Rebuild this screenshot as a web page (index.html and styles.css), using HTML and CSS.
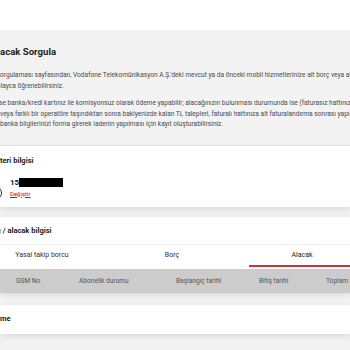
FILE: index.html
```html
<!DOCTYPE html>
<html lang="tr">
<head>
<meta charset="utf-8">
<link rel="stylesheet" href="styles.css">
</head>
<body>
<div class="page">
  <div class="topbar"></div>
  <section class="intro">
    <h1 class="intro-title">acak Sorgula</h1>
    <p class="intro-text">
      <span class="line">orgulaması sayfasından, Vodafone Telekomünikasyon A.Ş.'deki mevcut ya da önceki mobil hizmetlerinize ait borç veya alacak</span>
      <span class="line line-cut">ılayca öğrenebilirsiniz.</span>
    </p>
    <p class="intro-text">
      <span class="line line-cut">se banka/kredi kartınız ile komisyonsuz olarak ödeme yapabilir; alacağınızın bulunması durumunda ise (faturasız hattınız</span>
      <span class="line">veya farklı bir operatöre taşındıktan sonra bakiyenizde kalan TL talepleri, faturalı hattınıza ait faturalandırma sonrası yapılan</span>
      <span class="line">banka bilgilerinizi forma girerek iadenin yapılması için kayıt oluşturabilirsiniz.</span>
    </p>
  </section>

  <section class="card card-customer">
    <h2 class="card-title">teri bilgisi</h2>
    <div class="customer-row">
      <svg class="avatar" width="16" height="16" viewBox="0 0 16 16"><circle cx="8" cy="8" r="6.5" fill="none" stroke="#333" stroke-width="1"/><path d="M3.5 13 Q8 8 12.5 13" fill="none" stroke="#333" stroke-width="1"/></svg>
      <div class="customer-info">
        <div class="msisdn">15<span class="redact"></span></div>
        <a class="change-link" href="#">Değiştir</a>
      </div>
    </div>
  </section>

  <section class="card card-debt">
    <h2 class="card-title card-title-cut">ç / alacak bilgisi</h2>
    <div class="tabs">
      <div class="tab">Yasal takip borcu</div>
      <div class="tab">Borç</div>
      <div class="tab tab-active">Alacak</div>
    </div>
    <div class="table-head">
      <div class="th">GSM No</div>
      <div class="th">Abonelik durumu</div>
      <div class="th">Başlangıç tarihi</div>
      <div class="th">Bitiş tarihi</div>
      <div class="th">Toplam iade tutarı</div>
    </div>
  </section>

  <section class="card card-pay">
    <h2 class="card-title">me</h2>
  </section>
</div>
</body>
</html>
```

FILE: styles.css
```css
html, body {
  margin: 0;
  padding: 0;
}
body {
  width: 350px;
  height: 350px;
  overflow: hidden;
  background: #f2f2f2;
  font-family: Roboto, "Liberation Sans", sans-serif;
  color: #333;
}
.page {
  display: flex;
  flex-direction: column;
}
.topbar {
  height: 30px;
  background: #ffffff;
}
.intro {
  background: #f3f3f3;
  padding: 15px 0 15px 0;
  border-bottom: 1px solid #e6e6e6;
}
.intro-title {
  margin: 0;
  font-size: 9.6px;
  line-height: 13px;
  font-weight: 700;
  color: #222;
  white-space: nowrap;
}
.intro-text {
  margin: 12px 0 0 0;
  font-size: 6.6px;
  line-height: 10.5px;
  color: #4a4a4a;
}
.intro-text + .intro-text {
  margin-top: 7px;
}
.line {
  display: block;
  white-space: nowrap;
}
.line-cut {
  margin-left: -1px;
}
.card {
  background: #ffffff;
  box-shadow: 0 2px 6px rgba(0, 0, 0, 0.10);
}
.card-title {
  margin: 0;
  font-size: 7.5px;
  line-height: 10px;
  font-weight: 700;
  color: #222;
  white-space: nowrap;
}
.card-customer {
  padding: 10px 0 9px 0;
  height: 42px;
}
.customer-row {
  display: flex;
  align-items: flex-start;
  margin-top: 12px;
}
.avatar {
  margin-left: -13px;
  margin-top: 7px;
  flex: none;
}
.customer-info {
  margin-left: 7px;
  display: flex;
  flex-direction: column;
}
.msisdn {
  position: relative;
  font-size: 8px;
  line-height: 10px;
  font-weight: 700;
  color: #222;
}
.redact {
  position: absolute;
  left: 9px;
  top: 0;
  width: 44px;
  height: 9px;
  background: #000;
}
.change-link {
  margin-top: 1px;
  font-size: 6px;
  line-height: 9px;
  color: #e60000;
  text-decoration: underline;
}
.card-debt {
  margin-top: 10px;
  padding-top: 9px;
}
.card-title-cut {
  margin-left: -3px;
}
.tabs {
  margin-top: 8px;
  margin-left: -11px;
  display: grid;
  grid-template-columns: 106px 106px 106px;
  column-gap: 24px;
  border-top: 1px solid #f0f0f0;
}
.tab {
  height: 22px;
  display: flex;
  align-items: center;
  justify-content: center;
  font-size: 7px;
  color: #333;
  white-space: nowrap;
  border-bottom: 2px solid transparent;
  box-sizing: border-box;
}
.tab-active {
  color: #222;
  border-bottom-color: #c8363a;
}
.table-head {
  margin-top: 2px;
  height: 24px;
  background: #cccccc;
  display: grid;
  grid-template-columns: 63px 97px 83px 67px 1fr;
  align-items: center;
  padding-left: 16px;
}
.th {
  font-size: 6.6px;
  color: #555;
  white-space: nowrap;
}
.card-pay {
  margin-top: 12px;
  height: 29px;
  display: flex;
  align-items: center;
}
```
